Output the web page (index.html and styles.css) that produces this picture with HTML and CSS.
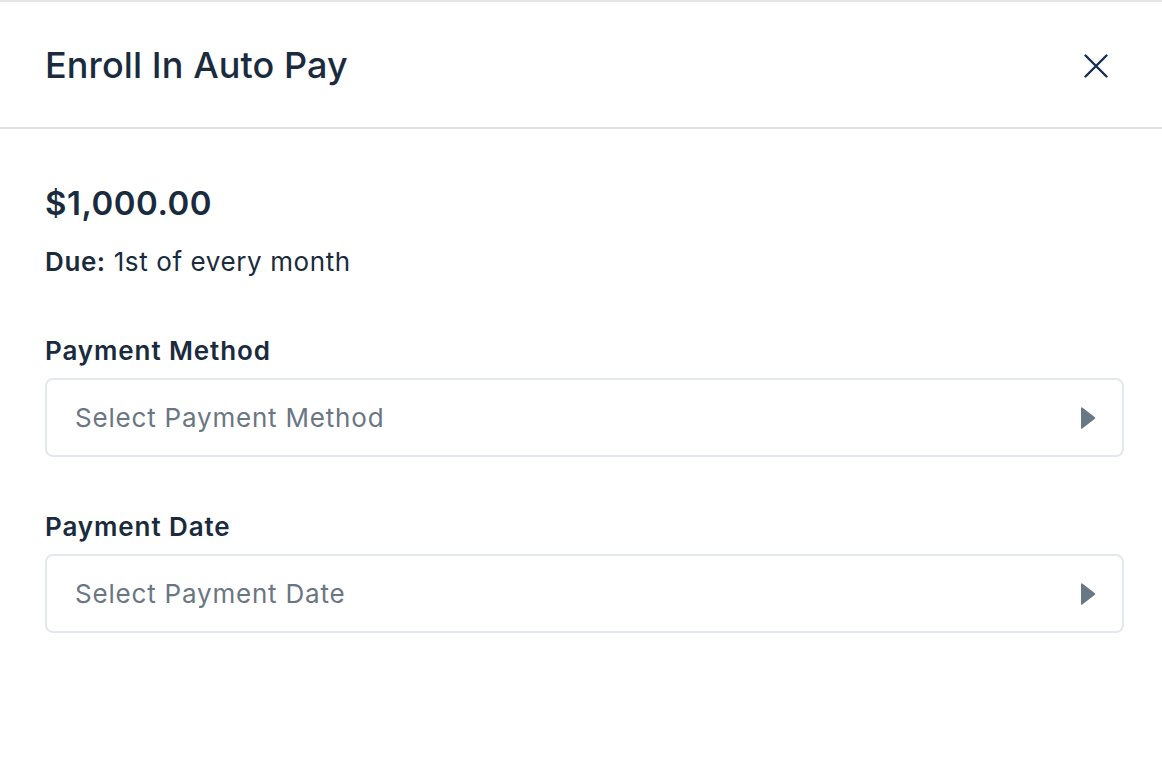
FILE: index.html
```html
<!DOCTYPE html>
<html lang="en">
<head>
<meta charset="utf-8">
<title>Enroll In Auto Pay</title>
<link rel="stylesheet" href="styles.css">
</head>
<body>
<div class="modal">
  <header class="modal-header">
    <h1 class="modal-title">Enroll In Auto Pay</h1>
    <button class="close-btn" aria-label="Close">
      <svg width="24" height="24" viewBox="0 0 24 24" fill="none" stroke="#15304f" stroke-width="2.4" stroke-linecap="round">
        <path d="M1.5 1.5 L22.5 22.5 M22.5 1.5 L1.5 22.5"/>
      </svg>
    </button>
  </header>
  <main class="modal-body">
    <div class="amount">$1,000.00</div>
    <div class="due"><strong>Due:</strong> 1st of every month</div>

    <div class="field">
      <label class="field-label">Payment Method</label>
      <div class="select">
        <span class="placeholder">Select Payment Method</span>
        <svg class="caret" width="16" height="24" viewBox="0 0 16 24"><path d="M1 2.5 Q1 0.5 2.6 1.8 L14.6 10.9 Q15.8 12 14.6 13.1 L2.6 22.2 Q1 23.5 1 21.5 Z" fill="#6a7785"/></svg>
      </div>
    </div>

    <div class="field">
      <label class="field-label">Payment Date</label>
      <div class="select">
        <span class="placeholder">Select Payment Date</span>
        <svg class="caret" width="16" height="24" viewBox="0 0 16 24"><path d="M1 2.5 Q1 0.5 2.6 1.8 L14.6 10.9 Q15.8 12 14.6 13.1 L2.6 22.2 Q1 23.5 1 21.5 Z" fill="#6a7785"/></svg>
      </div>
    </div>
  </main>
</div>
</body>
</html>
```

FILE: styles.css
```css
* { box-sizing: border-box; }
html, body { margin: 0; padding: 0; background: #ffffff; }
body {
  font-family: Inter, "Noto Sans", "Liberation Sans", sans-serif;
  color: #1a2b3e;
}
.modal {
  border-top: 2px solid #e3e5e8;
  min-height: 764px;
}
.modal-header {
  height: 127px;
  display: flex;
  align-items: center;
  justify-content: space-between;
  padding: 0 54px 0 45px;
  border-bottom: 2px solid #dcdfe3;
}
.modal-title {
  margin: 0;
  font-size: 36px;
  line-height: 44px;
  font-weight: 500;
  letter-spacing: 0.1px;
  color: #1a2b3e;
}
.close-btn {
  display: flex;
  padding: 0;
  margin: 2px 0 0 0;
  border: 0;
  background: none;
  cursor: pointer;
}
.modal-body {
  padding: 54px 38px 0 45px;
}
.amount {
  font-size: 33px;
  line-height: 40px;
  font-weight: 600;
  letter-spacing: 0.5px;
}
.due {
  margin-top: 23px;
  font-size: 26px;
  line-height: 32px;
  font-weight: 400;
  letter-spacing: 0.6px;
}
.due strong { font-weight: 600; }
.field { margin-top: 57px; }
.field + .field { margin-top: 54px; }
.field-label {
  display: block;
  font-size: 26px;
  line-height: 32px;
  font-weight: 600;
  letter-spacing: 0.9px;
}
.select {
  margin-top: 11px;
  height: 79px;
  border: 2px solid #e3e7ee;
  border-radius: 8px;
  display: flex;
  align-items: center;
  justify-content: space-between;
  padding: 0 26px 0 28px;
}
.placeholder {
  font-size: 26px;
  line-height: 32px;
  color: #6b7684;
  letter-spacing: 0.8px;
}
.caret { display: block; }
```
